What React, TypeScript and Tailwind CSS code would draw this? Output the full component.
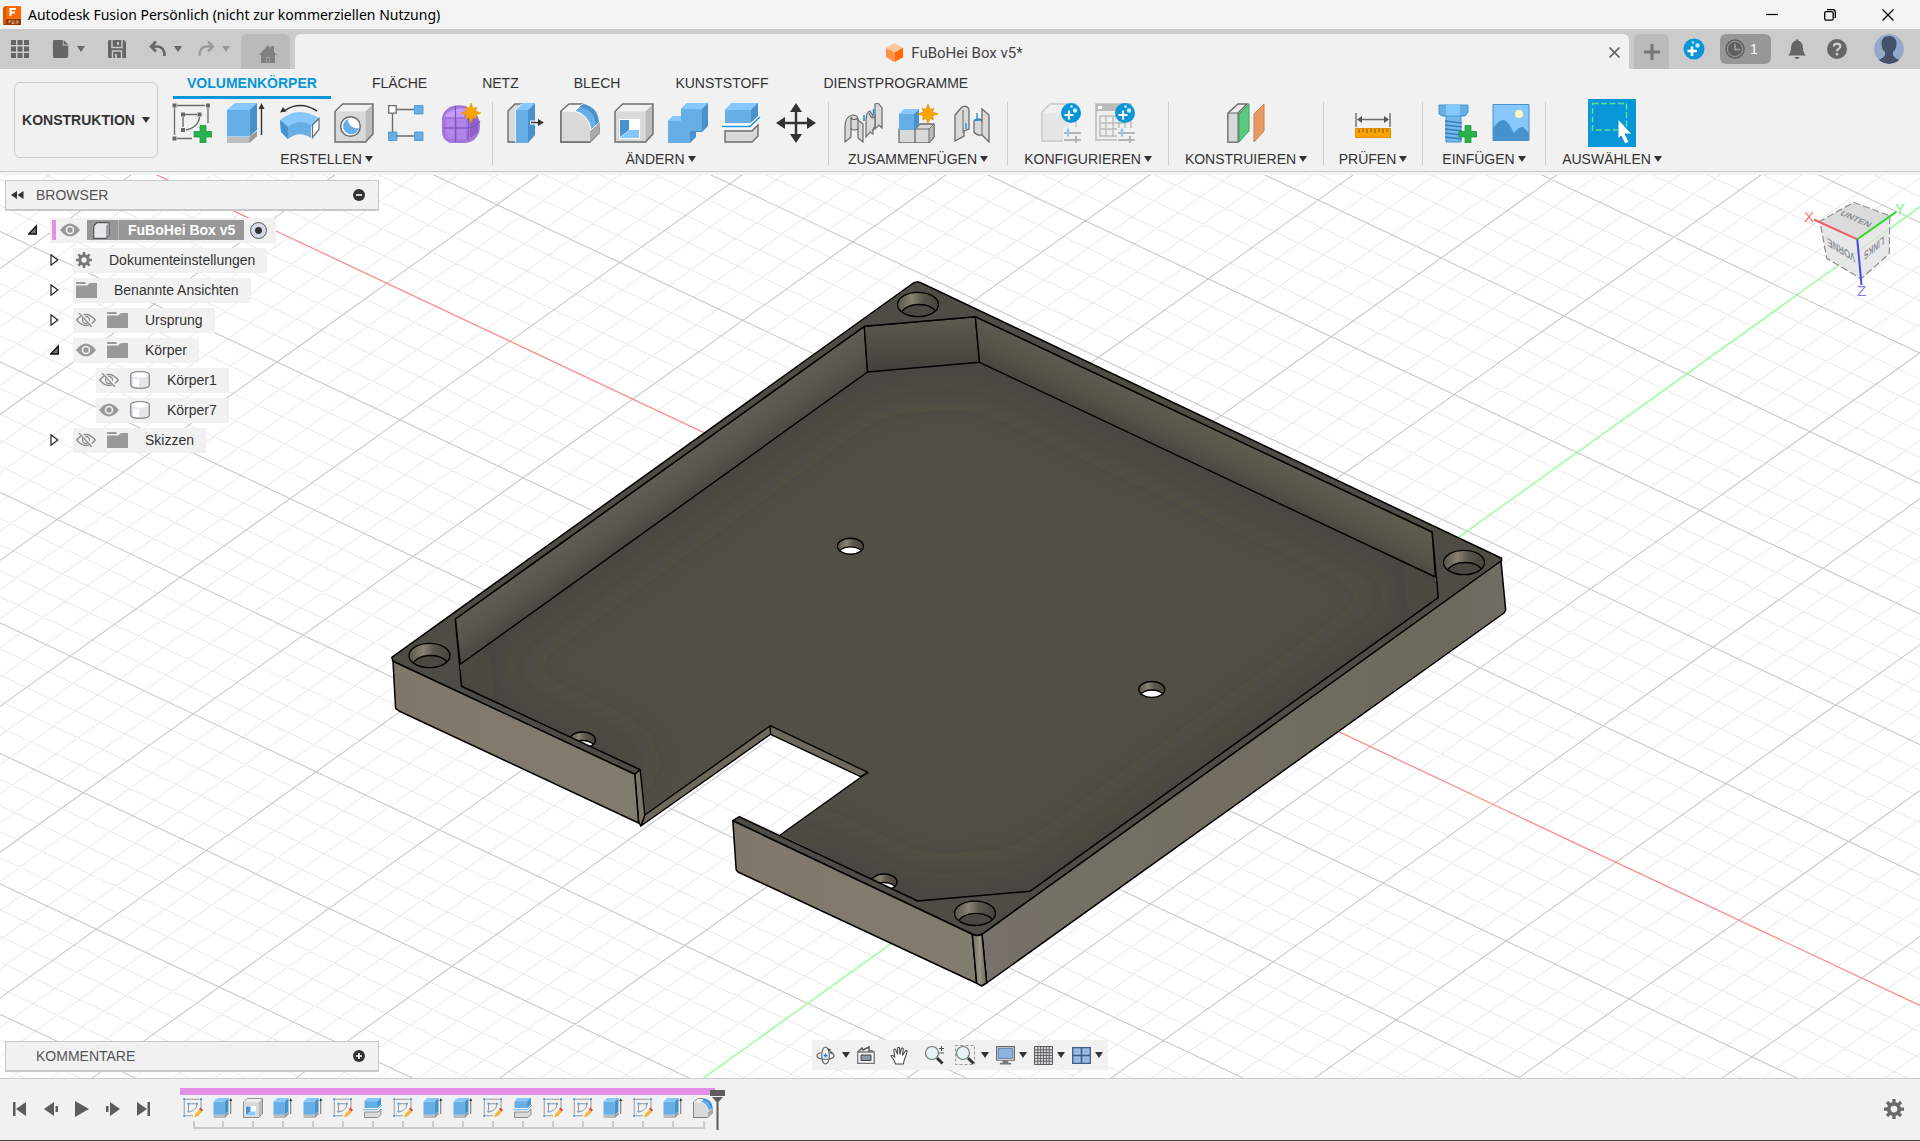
import type { ReactNode } from "react";

const BLUE = "#66aee6";
const BLUE_TOP = "#86c8fd";
const BLUE_SIDE = "#4792cd";
const GREY = "#d9d9d9";
const LINE = "#6b6b6b";

const Svg = ({ size = 40, box = "0 0 40 40", children }: { size?: number; box?: string; children: ReactNode }) => (
  <svg width={size} height={size} viewBox={box} fill="none" className="block shrink-0" aria-hidden="true">
    {children}
  </svg>
);

const Caret = ({ color = "#333" }: { color?: string }) => (
  <svg width="8" height="6" viewBox="0 0 8 6" className="shrink-0" aria-hidden="true">
    <path d="M0 0H8L4 6Z" fill={color} />
  </svg>
);

const Star = ({ x, y, r = 10 }: { x: number; y: number; r?: number }) => {
  const points = Array.from({ length: 16 }, (_, i) => {
    const radius = i % 2 ? r * 0.5 : i % 4 ? r * 0.8 : r;
    const angle = (i * Math.PI) / 8;
    return `${x + radius * Math.sin(angle)},${y - radius * Math.cos(angle)}`;
  }).join(" ");
  return <polygon points={points} fill="#f9a400" stroke="#e38f00" strokeWidth="0.6" />;
};

const GreenPlus = () => <path d="M28 22.5h6v6h6v5.5h-6v6h-6v-6h-6v-5.5h6z" fill="#28b14c" stroke="#14913a" strokeWidth="0.7" />;

const Badge = () => (
  <>
    <path d="M23 30h17M23 37h17M35 33v7" stroke="#b5b5b5" strokeWidth="2.2" />
    <path d="M27 25.5v8" stroke="#8cc6ee" strokeWidth="2.4" />
    <circle cx="30" cy="10" r="10" fill="#0896d9" />
    <path d="M28 7.5v9M23.5 12h9" stroke="#fff" strokeWidth="2.2" />
    <circle cx="34" cy="7.5" r="2.2" fill="#d5f0ff" />
    <circle cx="30.5" cy="3.5" r="1.3" fill="#d5f0ff" />
  </>
);

/* ---------- ribbon icons ---------- */

const SketchIcon = ({ size = 40, pencil = false }: { size?: number; pencil?: boolean }) => (
  <Svg size={size}>
    <path d="M5 2.500H33M2.500 5V32M36 5V20M5 35.500H20" stroke={LINE} strokeWidth="1.3" />
    <path d="M13 11.500H25M11 14V24M27.500 14C27 21 21 26 14 27" stroke={LINE} strokeWidth="1.4" />
    <g fill={pencil ? BLUE_SIDE : "#666"}>
      <path d="M.5.5h4v4h-4zM34 .5h4v4h-4zM.5 33.500h4v4h-4z" />
      <path d="M9 9.500h4v4H9zM25.500 9.500h4v4h-4zM9 25h4v4H9z" />
    </g>
    {pencil ? (
      <>
        <path d="M22 39l3-8 8-8 5 5-8 8z" fill="#f5b740" />
        <path d="M32 22l3-3 5 5-3 3z" fill="#e5383b" />
      </>
    ) : (
      <GreenPlus />
    )}
  </Svg>
);

const ExtrudeIcon = ({ size = 40 }: { size?: number }) => (
  <Svg size={size}>
    <path d="M1 34H23.5L31 28V33L23.5 40H1Z" fill="#bdbdbd" />
    <path d="M23.5 34L31 28V33L23.5 40Z" fill="#999" />
    <path d="M1 7H23.5V33.5H1Z" fill={BLUE} />
    <path d="M1 7L9 0H31L23.5 7Z" fill={BLUE_TOP} />
    <path d="M23.5 7L31 0V27L23.5 33.5Z" fill={BLUE_SIDE} />
    <path d="M35.5 4V32" stroke="#333" strokeWidth="1.4" />
    <path d="M35.5 0L38.5 6H32.5Z" fill="#333" />
  </Svg>
);

const RevolveIcon = () => (
  <Svg>
    <path d="M0 17Q18 2 39 15L32 24Q19 15 8 26Z" fill={BLUE_TOP} />
    <path d="M0 17L8 24Q19 15 31 22V35Q19 27 8 36L1 29Z" fill={BLUE} />
    <path d="M0 17L8 24V36L1 29Z" fill={BLUE_SIDE} />
    <path d="M32.5 22L39 15.5V26.5L32.5 34.5Z" fill="#fff" stroke={LINE} strokeWidth="1.2" />
    <path d="M4 8Q20 -3 37 8" stroke="#333" strokeWidth="1.5" />
    <path d="M0 9.500L3 4L6.5 8.5Z" fill="#333" />
  </Svg>
);

const GreyBlock = () => (
  <>
    <path d="M1 8.5L8.5 1H39V31L31.5 39H1Z" fill="#f0f0f0" />
    <path d="M1 8.5H31.5V39H1Z" fill={GREY} />
    <path d="M31.5 8.5L39 1V31L31.5 39Z" fill="#bcbcbc" />
    <path d="M1 8.5L8.5 1H39V31L31.5 39H1Z" stroke={LINE} strokeWidth="1.4" />
  </>
);

const HoleIcon = () => (
  <Svg>
    <GreyBlock />
    <circle cx="16.5" cy="23.5" r="9.8" fill="#fff" stroke={LINE} strokeWidth="1.5" />
    <path d="M14 16A8 8 0 1 0 25 25A9 9 0 0 1 14 16Z" fill={BLUE} />
  </Svg>
);

const PatternIcon = () => (
  <Svg>
    <path d="M9 6.5H26M4.500 11V29M9 33H26" stroke={LINE} strokeWidth="1.4" />
    <path d="M.7 2.700h7.500v7.500h-7.500z" fill="#fff" stroke={LINE} strokeWidth="1.3" />
    <path d="M26.5 2.5h8.5v8.5h-8.5zM26.5 29h8.5v8.5h-8.5zM.5 29h8.5v8.5H.5z" fill={BLUE} stroke={BLUE_SIDE} strokeWidth="0.8" />
  </Svg>
);

const FormIcon = () => (
  <Svg>
    <path d="M8 4Q14 1 24 3L34 12Q40 18 37 30Q33 39 24 40H8Q-1 37 0 26V15Q1 8 8 4Z" fill="#a477dd" />
    <path d="M3 12Q12 3 25 6L22 14H4Z" fill="#c59bff" />
    <path d="M4 16h9v8H4zM15 16h9v8h-9zM4 26h9v10H7q-3-2-3-6zM15 26h9v10h-9z" fill="#b184ea" />
    <path d="M28 18L36 13V29L28 35Z" fill="#8e5fc8" />
    <path d="M13.5 3V39M1 25H26Q34 24 38 18M26 6Q27 22 26 37" stroke="#7e55b3" strokeWidth="1.2" />
    <Star x={29} y={10} r={10} />
  </Svg>
);

const PressPullIcon = () => (
  <Svg>
    <path d="M2 8L9 1H18V32L10 39H2Z" fill={GREY} stroke={LINE} strokeWidth="1.4" />
    <path d="M9 7L16 0V33L9 40Z" fill="#f1f1f1" />
    <path d="M10 7H22V40H10Z" fill={BLUE} />
    <path d="M10 7L17 0H29L22 7Z" fill={BLUE_TOP} />
    <path d="M22 7L29 0V32L22 40Z" fill={BLUE_SIDE} />
    <path d="M24 19.5H34" stroke="#fff" strokeWidth="4" />
    <path d="M25 19.5H34" stroke="#333" strokeWidth="1.6" />
    <path d="M32 16L38 19.5L32 23Z" fill="#333" />
  </Svg>
);

const FilletIcon = ({ size = 40 }: { size?: number }) => (
  <Svg size={size}>
    <path d="M1 8L9 1H22Q39 6 39 25V30L30 39H1Z" fill="#f2f2f2" stroke={LINE} strokeWidth="1.4" />
    <path d="M1 9H15Q29 12 30 28V39H1Z" fill={GREY} />
    <path d="M30 28L39 20V30L30 39Z" fill="#aaa" />
    <path d="M15 8L22 1Q38 4 39 19L31 27Q29 12 15 8Z" fill={BLUE} stroke="#fff" strokeWidth="1" />
    <path d="M23 1Q38 4 39 19L36 22Q34 6 20 4Z" fill={BLUE_SIDE} />
    <path d="M1 8V39H30" stroke={LINE} strokeWidth="1.4" />
  </Svg>
);

const ShellIcon = ({ size = 40 }: { size?: number }) => (
  <Svg size={size}>
    <GreyBlock />
    <path d="M5 16H26V36H5Z" fill="#fff" />
    <path d="M6 17H15V27L6 34Z" fill={BLUE_SIDE} />
    <path d="M6 35L15 27H25V35Z" fill={BLUE_TOP} />
  </Svg>
);

const CombineIcon = () => (
  <Svg>
    <path d="M0 18L5 13H13V6L19 0H40V23L34 29H28V34L22 40H0Z" fill={BLUE_SIDE} />
    <path d="M0 18L5 13H13V6L19 0H40L34 6H13V18Z" fill={BLUE_TOP} />
    <path d="M0 18H13V6H34V28H22V40H0Z" fill={BLUE} />
  </Svg>
);

const SplitIcon = ({ size = 40 }: { size?: number }) => (
  <Svg size={size}>
    <path d="M3 28H30L36 22V33L30 39H3Z" fill={GREY} stroke={LINE} strokeWidth="1.4" />
    <path d="M3 7L10 0H36V14L29 20H3Z" fill={BLUE} />
    <path d="M3 7L10 0H36L29 7Z" fill={BLUE_TOP} />
    <path d="M29 7L36 0V14L29 20Z" fill={BLUE_SIDE} />
    <path d="M0 23.5H28L38 14" stroke="#fff" strokeWidth="4" />
    <path d="M0 23.5H28L38 14" stroke="#1a94dd" strokeWidth="1.5" />
  </Svg>
);

const MoveIcon = () => (
  <Svg>
    <path d="M20 7V33M7 20H33" stroke="#333" strokeWidth="2.4" />
    <path d="M20 0L26 9H14ZM20 40L26 31H14ZM0 20L9 14V26ZM40 20L31 14V26Z" fill="#333" />
  </Svg>
);

const AssembleIcon = () => (
  <Svg>
    <g fill={GREY} stroke={LINE} strokeWidth="1.2">
      <path d="M31 1L34 0L38 5V25L35 22L31 26Z" />
      <path d="M22 18Q22 9 26 8L29 13V31L26 29L22 34Z" />
      <path d="M25 10Q28 18 31 13V23L28 28" />
      <path d="M1 24Q1 13 9 12Q14 12 14 17L19 21V39L14 35V26Q10 28 7 26V34L1 39Z" />
      <path d="M7 14V26M14 16V26M7 15Q10 18 14 15" />
    </g>
    <path d="M20 12V18M29.500 6V12" stroke="#1a94dd" strokeWidth="1.6" />
  </Svg>
);

const NewComponentIcon = () => (
  <Svg>
    <path d="M1 26H17V40H1ZM17 26L22 21H36V34L31 40H17Z" fill={GREY} stroke={LINE} strokeWidth="1.3" />
    <path d="M31 26L36 21V34L31 40ZM17 26H31" stroke={LINE} fill="#bbb" />
    <path d="M1 11H16V27H1Z" fill={BLUE} />
    <path d="M1 11L6 6H21L16 11Z" fill={BLUE_TOP} />
    <path d="M16 11L21 6V21L16 27Z" fill={BLUE_SIDE} />
    <Star x={30} y={11} r={10} />
  </Svg>
);

const JointIcon = () => (
  <Svg>
    <path d="M3 12L9 5Q14 1 17 6V26L12 28V33L3 38Z" fill={GREY} stroke={LINE} strokeWidth="1.3" />
    <path d="M11 7V30" stroke={LINE} />
    <path d="M22 18Q27 14 30 18V6L37 12V39L30 32Q25 33 22 29Z" fill={GREY} stroke={LINE} strokeWidth="1.3" />
    <path d="M30 18V32" stroke={LINE} />
    <path d="M14 20V26M25 10V18M22 17H28" stroke="#1a94dd" strokeWidth="1.4" />
  </Svg>
);

const ConfigureIcon = () => (
  <Svg>
    <path d="M1 9L9 1H35V31L28 38H1Z" fill="#f0f0f0" stroke="#c6c6c6" strokeWidth="1.5" />
    <path d="M2 10H28V37H2Z" fill="#e6e6e6" />
    <path d="M22 24H40V40H22Z" fill="#f1f1f1" />
    <Badge />
  </Svg>
);

const ConfigTableIcon = () => (
  <Svg>
    <path d="M1 1H36V37H1Z" fill="#eee" stroke="#bbb" strokeWidth="1.5" />
    <path d="M1 1H36V8H1Z" fill="#bababa" />
    <path d="M3 3h4v3H3z" fill="#fff" />
    <path d="M5 13H30V33H5ZM5 20H30M5 26H30M11 13V33M18 13V33M24 13V33" stroke="#bbb" strokeWidth="1.4" />
    <path d="M22 25H40V40H22Z" fill="#f1f1f1" />
    <Badge />
  </Svg>
);

const PlaneIcon = () => (
  <Svg>
    <path d="M2 10L12 1H21L12 10V39H2Z" fill="#eee" stroke={LINE} strokeWidth="1.5" />
    <path d="M2 10H12V39H2Z" fill={GREY} stroke={LINE} />
    <path d="M13 11L23 1V28L13 39Z" fill="#5bc980" stroke="#35a85d" />
    <path d="M28 11L38 1V28L28 39Z" fill="#e79a63" stroke="#d07f44" />
  </Svg>
);

const MeasureIcon = () => (
  <Svg>
    <path d="M3 10V24M37 10V24M6 16.5H34" stroke={LINE} strokeWidth="1.4" />
    <path d="M4 16.5L9 13V20ZM36 16.5L31 13V20Z" fill="#555" />
    <path d="M2.5 25.5H37.5V34.5H2.5Z" fill="#f9a400" stroke="#e08e00" />
    <path d="M6 26v4M10 26v3M14 26v4M18 26v3M22 26v4M26 26v3M30 26v4M34 26v3" stroke="#74500c" />
  </Svg>
);

const BoltIcon = () => (
  <Svg>
    <path d="M9 12H24V39H9Z" fill="#74b7e9" stroke={BLUE_SIDE} />
    <path d="M8 18L25 20M8 22L25 24M8 26L25 28M8 30L25 32M8 34L25 36" stroke="#387fb9" strokeWidth="1.3" />
    <path d="M2 2H31V9L28 13H5L2 11Z" fill={BLUE} stroke={BLUE_SIDE} />
    <path d="M9 1.5H23V12.5H9Z" fill={BLUE_TOP} />
    <GreenPlus />
  </Svg>
);

const PictureIcon = () => (
  <Svg>
    <path d="M2 1.5H38V37.5H2Z" fill={BLUE_TOP} stroke={BLUE_SIDE} />
    <path d="M2 25Q9 16 13 17Q17 18 23 30Q28 23 32 24L38 30V37.5H2Z" fill={BLUE_SIDE} />
    <circle cx="28" cy="11" r="4" fill="#fff6bd" />
  </Svg>
);

const SelectIcon = () => (
  <Svg size={48} box="0 0 48 48">
    <path d="M4.5 4.5H38.5V31H4.5Z" stroke="#65e08c" strokeWidth="1.4" strokeDasharray="6 2.5" />
    <path d="M30 20L44 35H37L41 43L37 45L33 37L30 40Z" fill="#fff" stroke="#0896d9" strokeWidth="1" />
  </Svg>
);

type Group = { label: string; width: string; icons: ReactNode[]; last?: boolean };

const groups: Group[] = [
  {
    label: "ERSTELLEN",
    width: "w-[332px]",
    icons: [<SketchIcon />, <ExtrudeIcon />, <RevolveIcon />, <HoleIcon />, <PatternIcon />, <FormIcon />],
  },
  {
    label: "ÄNDERN",
    width: "w-[336px]",
    icons: [<PressPullIcon />, <FilletIcon />, <ShellIcon />, <CombineIcon />, <SplitIcon />, <MoveIcon />],
  },
  { label: "ZUSAMMENFÜGEN", width: "w-[179px]", icons: [<AssembleIcon />, <NewComponentIcon />, <JointIcon />] },
  { label: "KONFIGURIEREN", width: "w-[161px]", icons: [<ConfigureIcon />, <ConfigTableIcon />] },
  { label: "KONSTRUIEREN", width: "w-[155px]", icons: [<PlaneIcon />] },
  { label: "PRÜFEN", width: "w-[99px]", icons: [<MeasureIcon />] },
  { label: "EINFÜGEN", width: "w-[123px]", icons: [<BoltIcon />, <PictureIcon />] },
  { label: "AUSWÄHLEN", width: "w-[132px]", icons: [<SelectIcon />], last: true },
];

const ribbonTabs = ["VOLUMENKÖRPER", "FLÄCHE", "NETZ", "BLECH", "KUNSTSTOFF", "DIENSTPROGRAMME"];

/* ---------- window chrome ---------- */

const TitleBar = () => (
  <div className="flex h-[29px] shrink-0 items-center bg-[#f3f3f3] pl-[3px]">
    <svg width="18" height="20" viewBox="0 0 18 20" aria-hidden="true">
      <path d="M2 1H18V19H0V3Z" fill="#ff6b00" />
      <path d="M0 14H18V20H0Z" fill="#8f3a05" />
      <path d="M0 3L3 1V19L0 20Z" fill="#d95a00" />
      <path d="M7.5 11V4H13M7.5 7.5H12" stroke="#fff" strokeWidth="2" fill="none" />
      <path d="M6 15.5v3M6 16h2M9 15.5v3h2v-3M12.5 18h2.5v-2h-2" stroke="#f2c7a5" strokeWidth="0.8" fill="none" />
    </svg>
    <span className="ml-[7px] font-['Noto_Sans',sans-serif] text-sm text-black">
      Autodesk Fusion Persönlich (nicht zur kommerziellen Nutzung)
    </span>
    <div className="ml-auto flex h-full items-center text-black">
      <button aria-label="Minimieren" className="flex h-full w-[58px] items-center justify-center">
        <Svg size={12} box="0 0 12 12"><path d="M0 5.5H12" stroke="currentColor" strokeWidth="1.2" /></Svg>
      </button>
      <button aria-label="Verkleinern" className="flex h-full w-[58px] items-center justify-center">
        <Svg size={12} box="0 0 12 12">
          <rect x="0.7" y="2.7" width="8.5" height="8.5" rx="1.5" stroke="currentColor" strokeWidth="1.3" />
          <path d="M3 .7H9Q11.3.7 11.3 3V9" stroke="currentColor" strokeWidth="1.3" />
        </Svg>
      </button>
      <button aria-label="Schließen" className="mr-[3px] flex h-full w-[58px] items-center justify-center">
        <Svg size={12} box="0 0 12 12"><path d="M.5.5L11.5 11.5M11.5.5L.5 11.5" stroke="currentColor" strokeWidth="1.3" /></Svg>
      </button>
    </div>
  </div>
);

const TabBar = () => (
  <div className="flex h-10 shrink-0 items-end bg-[#cbcbcb]">
    <div className="flex h-[35px] w-[241px] items-center pb-1.5 pl-[11px]">
      <button aria-label="Datenbedienfeld">
        <Svg size={18} box="0 0 18 18">
          <path d="M0 0h5v5H0zM6.5 0h5v5h-5zM13 0h5v5h-5zM0 6.5h5v5H0zM6.5 6.5h5v5h-5zM13 6.5h5v5h-5zM0 13h5v5H0zM6.5 13h5v5h-5zM13 13h5v5h-5z" fill="#666" />
        </Svg>
      </button>
      <button aria-label="Datei" className="ml-[23px] flex items-center gap-[7px]">
        <Svg size={18} box="0 0 18 20">
          <path d="M1 0H11V6H17V18Q17 20 15 20H2Q0 20 0 18V2Q0 0 1 0ZM12 0L17 5H12Z" fill="#666" />
        </Svg>
        <Caret color="#666" />
      </button>
      <button aria-label="Speichern" className="ml-[23px]">
        <Svg size={18} box="0 0 18 18">
          <path d="M1 0H16L18 2V18H1L0 17V1Z" fill="#666" />
          <path d="M4 0V7.5H14V0M4.5 18V11H13.5V18" stroke="#cbcbcb" strokeWidth="1.4" />
          <path d="M10 2V5M8 14V18" stroke="#cbcbcb" strokeWidth="1.8" />
        </Svg>
      </button>
      <button aria-label="Rückgängig" className="ml-[23px] flex items-center gap-[7px]">
        <Svg size={18} box="0 0 18 18">
          <path d="M7 1.5L2 6.5L7 11.5M3 6.5H9Q15.5 7 15.5 16" stroke="#666" strokeWidth="2.6" />
        </Svg>
        <Caret color="#666" />
      </button>
      <button aria-label="Wiederherstellen" className="ml-[15px] flex items-center gap-[7px]">
        <Svg size={18} box="0 0 18 18">
          <path d="M11 1.5L16 6.5L11 11.5M15 6.5H9Q2.5 7 2.5 16" stroke="#999" strokeWidth="2.4" />
        </Svg>
        <Caret color="#999" />
      </button>
    </div>
    <button aria-label="Startseite" className="mr-[5px] flex h-[35px] w-[49px] items-center justify-center rounded-t-md bg-[#bababa] pl-1 pt-1">
      <Svg size={18} box="0 0 18 18">
        <path d="M0 10L9 0L12 3.5V1H15V7L18 10H16V18H11V12H7V18H2V10Z" fill="#808080" />
        <path d="M7.5 12.5H10.5V18H7.5Z" fill="#808080" />
      </Svg>
    </button>
    <div className="flex h-[35px] flex-1 items-center rounded-t-md bg-[#f1f1f1] pr-[9px] pt-0.5">
      <div className="flex flex-1 items-center justify-center gap-[7px] pl-1">
        <Svg size={19} box="0 0 19 20">
          <path d="M9.5 0L18.5 5L9.5 10L.5 5Z" fill="#ffc9a0" />
          <path d="M.5 5L9.5 10V20L.5 15Z" fill="#ff9448" />
          <path d="M18.5 5L9.5 10V20L18.5 15Z" fill="#ff6b00" />
        </Svg>
        <span className="font-[Roboto,sans-serif] text-[15px] leading-5 text-[#444]">FuBoHei Box v5*</span>
      </div>
      <button aria-label="Dokument schließen">
        <Svg size={11} box="0 0 11 11"><path d="M.5.5L10.5 10.5M10.5.5L.5 10.5" stroke="#666" strokeWidth="1.7" /></Svg>
      </button>
    </div>
    <button aria-label="Neues Dokument" className="ml-[5px] flex h-[35px] w-[35px] items-center justify-center rounded-t-md bg-[#bababa]">
      <Svg size={16} box="0 0 16 16"><path d="M8 0V16M0 8H16" stroke="#777" strokeWidth="3" /></Svg>
    </button>
    <div className="flex h-[35px] items-start pl-[14px] pr-4">
      <div className="flex h-[30px] items-center">
        <button aria-label="Neuigkeiten">
          <Svg size={22} box="0 0 22 22">
            <circle cx="11" cy="11" r="10.5" fill="#0896d9" />
            <path d="M9 8.5V18M4.5 13H14" stroke="#fff" strokeWidth="2.6" />
            <circle cx="14.5" cy="7.5" r="2.2" fill="#bfe8fb" />
            <circle cx="10" cy="4.5" r="1.3" fill="#bfe8fb" />
          </Svg>
        </button>
        <button className="ml-[15px] flex h-[30px] w-[51px] items-center gap-[5px] rounded-md bg-[#979797] pl-[5px] text-sm text-white">
          <Svg size={20} box="0 0 20 20">
            <circle cx="10" cy="10" r="9" stroke="#606060" strokeWidth="1.5" />
            <circle cx="10" cy="10" r="7" fill="#606060" />
            <path d="M10 5V10.5H15" stroke="#a5a5a5" strokeWidth="1.5" />
          </Svg>
          1
        </button>
        <button aria-label="Benachrichtigungen" className="ml-4">
          <Svg size={20} box="0 0 18 20">
            <path d="M9 0Q10 0 10 1.5Q15 3 15 9Q15 14 18 16.5H0Q3 14 3 9Q3 3 8 1.5Q8 0 9 0ZM6.5 18H11.5Q11 20 9 20Q7 20 6.5 18Z" fill="#666" />
          </Svg>
        </button>
        <button aria-label="Hilfe" className="ml-5">
          <Svg size={20} box="0 0 20 20">
            <circle cx="10" cy="10" r="10" fill="#666" />
            <path d="M6.8 7.5Q7 4.7 10 4.7Q13.3 4.7 13.3 7.3Q13.3 9 11.5 10Q10 10.8 10 12.3" stroke="#cbcbcb" strokeWidth="2.2" />
            <circle cx="10" cy="15.2" r="1.4" fill="#cbcbcb" />
          </Svg>
        </button>
        <button aria-label="Profil" className="ml-[27px] overflow-hidden rounded-full">
          <Svg size={30} box="0 0 30 30">
            <circle cx="15" cy="15" r="15" fill="#93a9ca" />
            <path d="M15 2Q22.5 2 22.5 10Q22 16 19 18V21Q20 24 26 26Q21 30 15 30Q9 30 4 26Q10 24 11 21V18Q8 16 7.5 10Q7.5 2 15 2Z" fill="#44536b" />
          </Svg>
        </button>
      </div>
    </div>
  </div>
);

const Ribbon = () => (
  <div className="flex h-[106px] shrink-0 border-b-[3px] border-[#f4f4f4] bg-[#f1f1f1]">
    <div className="flex flex-1 border-b border-[#c8c8c8]">
      <button className="ml-[14px] mt-[13px] flex h-[76px] w-36 items-center justify-center gap-[7px] rounded-md border border-[#cacaca] text-sm font-bold text-[#333]">
        KONSTRUKTION
        <Caret />
      </button>
      <div className="flex flex-1 flex-col pl-[3px]">
        <div className="flex gap-[27px] pl-3 text-sm text-[#333]">
          {ribbonTabs.map((tab, index) => (
            <button
              key={tab}
              className={
                index === 0
                  ? "h-[30px] border-b-[3px] border-[#0896d9] px-3.5 font-bold text-[#0896d9]"
                  : "h-[30px] border-b-[3px] border-transparent px-3.5"
              }
            >
              {tab}
            </button>
          ))}
        </div>
        <div className="flex pt-[3px]">
          {groups.map((group) => (
            <div
              key={group.label}
              className={`flex h-[63px] flex-col items-center ${group.width} ${group.last ? "" : "border-r border-[#ccc]"}`}
            >
              <div className="flex h-[42px] shrink-0 items-center gap-3.5">
                {group.icons.map((icon, index) => (
                  <button
                    key={index}
                    aria-label={`${group.label} ${index + 1}`}
                    className={group.last ? "bg-[#0896d9]" : ""}
                  >
                    {icon}
                  </button>
                ))}
              </div>
              <button className="mt-[7px] flex items-center gap-[3px] text-sm leading-4 text-[#333]">
                {group.label}
                <Caret />
              </button>
            </div>
          ))}
        </div>
      </div>
    </div>
  </div>
);

/* ---------- canvas ---------- */

// Affine ground grid: origin plus one major step along each axis.
const origin = { x: 1247.3, y: 688.6 };
const stepA = { x: 122.9, y: 57.9 };
const stepB = { x: 109.9, y: -78.7 };

const gridLine = (from: { x: number; y: number }, along: { x: number; y: number }, n: number) => {
  const x = origin.x + from.x * n;
  const y = origin.y + from.y * n;
  return `M${x - along.x * 20} ${y - along.y * 20}L${x + along.x * 20} ${y + along.y * 20}`;
};

const minorGrid: string[] = [];
const majorGrid: string[] = [];
for (let i = -80; i <= 80; i++) {
  if (i === 0) continue;
  const target = i % 5 === 0 ? majorGrid : minorGrid;
  target.push(gridLine(stepB, stepA, i / 5), gridLine(stepA, stepB, i / 5));
}

const floorPath =
  "M867.5 372L979.5 362.3L1435.4 577L1438.2 597.7L1030 891.3L917.7 901L780.2 835L867.8 772.3L770.3 725.7L644.8 815L640 769.7L461.5 686.3L460.3 664.3Z";

const CornerHole = ({ x, y, id }: { x: number; y: number; id: string }) => (
  <>
    <clipPath id={id}><ellipse cx={x} cy={y} rx="20.5" ry="12.2" /></clipPath>
    <ellipse cx={x} cy={y} rx="20.5" ry="12.2" fill="url(#bore)" />
    <g clipPath={`url(#${id})`}>
      <ellipse cx={x + 1} cy={y + 11.5} rx="18.5" ry="11.5" fill="#4b4841" stroke="#000" strokeWidth="1.3" />
    </g>
    <ellipse cx={x} cy={y} rx="20.5" ry="12.2" stroke="#000" strokeWidth="1.3" />
  </>
);

const ScrewHole = ({ x, y, id }: { x: number; y: number; id: string }) => (
  <>
    <clipPath id={id}><ellipse cx={x} cy={y} rx="13" ry="8" /></clipPath>
    <ellipse cx={x} cy={y} rx="13" ry="8" fill="url(#bore)" />
    <g clipPath={`url(#${id})`}>
      <ellipse cx={x} cy={y + 8} rx="12.5" ry="7.5" fill="#fff" stroke="#000" strokeWidth="1.3" />
    </g>
    <ellipse cx={x} cy={y} rx="13" ry="8" stroke="#000" strokeWidth="1.4" />
  </>
);

const Model = () => (
  <g strokeLinejoin="round">
    <defs>
      <linearGradient id="bore"><stop stopColor="#5a564c" /><stop offset="0.35" stopColor="#898172" /><stop offset="0.6" stopColor="#5d584e" /><stop offset="1" stopColor="#454239" /></linearGradient>
      <linearGradient id="wallLeft" gradientUnits="userSpaceOnUse" x1="650" y1="470" x2="682" y2="515">
        <stop stopColor="#645f56" /><stop offset="0.5" stopColor="#59564e" /><stop offset="1" stopColor="#45433d" />
      </linearGradient>
      <linearGradient id="wallBack" x1="0" y1="0" x2="0" y2="1"><stop stopColor="#5e5a50" /><stop offset="1" stopColor="#42403a" /></linearGradient>
      <linearGradient id="wallRight" gradientUnits="userSpaceOnUse" x1="1215" y1="430" x2="1195" y2="471">
        <stop stopColor="#5f5b4f" /><stop offset="0.5" stopColor="#57534a" /><stop offset="1" stopColor="#45433d" />
      </linearGradient>
      <linearGradient id="faceFront"><stop stopColor="#7f776a" /><stop offset="1" stopColor="#827c6f" /></linearGradient>
      <linearGradient id="faceSide"><stop stopColor="#77716a" /><stop offset="0.4" stopColor="#736e61" /><stop offset="0.9" stopColor="#6d695c" /><stop offset="1" stopColor="#716d66" /></linearGradient>
      <linearGradient id="edge"><stop stopColor="#6f6a5e" /><stop offset="0.5" stopColor="#9b9485" /><stop offset="1" stopColor="#6b665b" /></linearGradient>
      <clipPath id="floorClip"><path d={floorPath} /></clipPath>
      <filter id="soft" x="-20%" y="-20%" width="140%" height="140%"><feGaussianBlur stdDeviation="24" /></filter>
    </defs>

    {/* floor with darkened border */}
    <path d={floorPath} fill="#524f47" />
    <g clipPath="url(#floorClip)">
      <path
        d="M640 769.7L461.5 686.3L460.3 664.3L867.5 372L979.5 362.3L1435.4 577L1438.2 597.7L1030 891.3L917.7 901L780.2 835"
        stroke="#34322d"
        strokeOpacity="0.45"
        strokeWidth="36"
        filter="url(#soft)"
      />
    </g>
    <ScrewHole x={850.5} y={546.3} id="screw1" />
    <ScrewHole x={1151.8} y={689.5} id="screw2" />
    <ScrewHole x={582.5} y={740} id="screw3" />
    <ScrewHole x={884} y={882} id="screw4" />

    {/* inner walls */}
    <g stroke="#000" strokeWidth="1.4">
      <path d="M455.3 619L864.3 326.3L867.5 372L460.3 664.3Z" fill="url(#wallLeft)" />
      <path d="M864.3 326.3L975.4 316.7L979.5 362.3L867.5 372Z" fill="url(#wallBack)" />
      <path d="M975.4 316.7L1432.2 532L1435.4 577L979.5 362.3Z" fill="url(#wallRight)" />
    </g>

    {/* rim */}
    <path
      d="M913.4 283Q917 281 920.8 282.7L1501.6 558.3V561L982 934.3Q977 936.5 972.3 934.3L732.8 820.7L739.3 816.7L917.7 901L1030 891.3L1438.2 597.7L1432.2 532L975.4 316.7L864.3 326.3L455.3 619L461.5 686.3L640.2 769.7L634.8 774.3L393 661.3L391.8 657.3Z"
      fill="#4f4c45"
      stroke="#000"
      strokeWidth="1.5"
    />

    {/* cut-out thickness */}
    <g stroke="#000" strokeWidth="1.4" fill="#6f695d">
      <path d="M644.8 815L770.3 725.7L770.6 734.3L640.9 826Z" />
      <path d="M770.3 725.7L867.8 772.3L860.6 776.7L770.6 734.3Z" />
      <path d="M780.2 835L867.8 772.3" />
      <path d="M634.8 774.3L640.2 769.7L644.8 815L640.9 826L638.6 822.3Z" fill="#7b7568" />
    </g>

    {/* outer faces */}
    <g stroke="#000" strokeWidth="1.5">
      <path d="M393 661.3L634.8 774.3L638.6 823L399 711L395.6 708.3Z" fill="url(#faceFront)" />
      <path d="M732.8 820.7L972.3 934.3L976.7 983.3L738 872L736.2 870Z" fill="url(#faceFront)" />
      <path d="M982 934.3L1501 561L1505.7 610L1504 613L986.7 983Z" fill="url(#faceSide)" />
      <path d="M972.3 934.3Q977 936.5 982 934.3L986.7 983L981.7 986L976.7 983.3Z" fill="url(#edge)" />
    </g>
    <CornerHole x={918} y={304.5} id="corner1" />
    <CornerHole x={1464} y={562.5} id="corner2" />
    <CornerHole x={429.5} y={655.5} id="corner3" />
    <CornerHole x={975} y={913.3} id="corner4" />
  </g>
);

const ViewCube = () => (
  <g fontFamily="Liberation Sans, sans-serif">
    <path d="M1853.7 202.3L1889.7 215.7L1857.3 239.3L1820 221.3Z" fill="#d5d5d5" fillOpacity="0.85" />
    <path d="M1820 221.3L1857.3 239.3L1861 278.7L1826.7 258.3Z" fill="#e3e3e3" fillOpacity="0.85" />
    <path d="M1857.3 239.3L1889.7 215.7L1889.3 253.7L1861 278.7Z" fill="#e0e0e0" fillOpacity="0.75" />
    <path d="M1853.7 202.3L1889.7 215.7L1889.3 253.7L1861 278.7L1826.7 258.3L1820 221.3Z" stroke="#8e8e8e" strokeWidth="1.2" strokeDasharray="7 3" />
    <g fill="#8b9095" fontSize="10" fontWeight="bold" textAnchor="middle">
      <text transform="matrix(.86 .37 -.6 .6 1854 221)">UNTEN</text>
      <text transform="matrix(-.78 -.48 -.1 -1.2 1841 246)">VORNE</text>
      <text transform="matrix(-.66 .55 0 -1.2 1874 244)">LINKS</text>
    </g>
    <path d="M1857.3 239.3L1814 219.5" stroke="#ec5f5f" strokeWidth="2" />
    <path d="M1857.3 239.3L1896 212" stroke="#1ee01e" strokeWidth="2" />
    <path d="M1857.3 239.3L1861.5 285" stroke="#4848e6" strokeWidth="2" />
    <g fontSize="15">
      <text x="1804" y="222" fill="#ff7373">X</text>
      <text x="1895" y="214" fill="#7df57d">Y</text>
      <text x="1857" y="296" fill="#7c7cf5">Z</text>
    </g>
  </g>
);

const Scene = () => (
  <svg viewBox="0 175 1920 903" preserveAspectRatio="xMidYMid slice" className="absolute inset-0 h-full w-full" fill="none" aria-label="FuBoHei Box v5">
    <path d={minorGrid.join("")} stroke="#ececec" strokeWidth="1.1" />
    <path d={majorGrid.join("")} stroke="#c9c9c9" strokeWidth="1.1" />
    <path d={gridLine(stepB, stepA, 0)} stroke="#ff8c8c" strokeWidth="1.3" />
    <path d={gridLine(stepA, stepB, 0)} stroke="#8cff8c" strokeWidth="1.3" />
    <Model />
    <ViewCube />
  </svg>
);

/* ---------- browser tree ---------- */

const Eye = ({ hidden = false }: { hidden?: boolean }) => (
  <svg width="20" height="14" viewBox="0 0 20 14" fill="none" className="shrink-0" aria-hidden="true">
    {hidden ? (
      <>
        <path d="M.7 7Q10 -4 19.3 7Q10 18 .7 7Z" stroke="#8c8c8c" strokeWidth="1.3" />
        <circle cx="10" cy="7" r="3.5" stroke="#8c8c8c" strokeWidth="1.3" />
        <path d="M4 0L17 14" stroke="#f1f1f1" strokeWidth="3" />
        <path d="M3 0L16 14" stroke="#8c8c8c" strokeWidth="1.3" />
      </>
    ) : (
      <>
        <path d="M0 7Q10 -6 20 7Q10 20 0 7Z" fill="#999" />
        <circle cx="10" cy="7" r="3.5" stroke="#f1f1f1" strokeWidth="1.6" />
      </>
    )}
  </svg>
);

const Folder = () => (
  <svg width="21" height="16" viewBox="0 0 21 16" className="shrink-0" aria-hidden="true">
    <path d="M0 0H9L10 2H0ZM0 3.5H11L14 1H21V16H0Z" fill="#999" />
  </svg>
);

const Body = () => (
  <svg width="20" height="18" viewBox="0 0 20 18" className="shrink-0" aria-hidden="true">
    <path d="M.7 4Q1 .7 10 .7Q19 .7 19.3 4V14Q19 17.3 10 17.3Q1 17.3 .7 14Z" fill="#e6e6ea" stroke="#888" strokeWidth="1.3" />
    <ellipse cx="10" cy="4" rx="8.5" ry="2.8" fill="#fff" />
    <path d="M3 7.500Q6 8.500 9 8.500V16Q5 16 3 15Z" fill="#fff" />
  </svg>
);

const Gear = ({ size = 16, color = "#777" }: { size?: number; color?: string }) => (
  <Svg size={size} box="0 0 16 16">
    <circle cx="8" cy="8" r="4.2" stroke={color} strokeWidth="3" />
    <path d="M8 0V3M8 13V16M0 8H3M13 8H16M2.4 2.4L4.5 4.5M11.5 11.5L13.6 13.6M13.6 2.4L11.5 4.5M4.5 11.5L2.4 13.6" stroke={color} strokeWidth="2.6" />
  </Svg>
);

const Twisty = ({ open = false }: { open?: boolean }) => (
  <svg width="9" height="12" viewBox="0 0 9 12" className="shrink-0" aria-hidden="true">
    {open ? (
      <path d="M.7 10H8.3V2Z" fill="#777" stroke="#111" strokeWidth="1.3" />
    ) : (
      <path d="M1 .8L7.8 6L1 11.2Z" fill="#fff" stroke="#222" strokeWidth="1.2" />
    )}
  </svg>
);

type TreeItem = {
  name: string;
  twisty?: "open" | "closed";
  eye?: "on" | "off";
  icon: ReactNode;
};

const tree: TreeItem[] = [
  { name: "Dokumenteinstellungen", twisty: "closed", icon: <Gear /> },
  { name: "Benannte Ansichten", twisty: "closed", icon: <Folder /> },
  { name: "Ursprung", twisty: "closed", eye: "off", icon: <Folder /> },
  { name: "Körper", twisty: "open", eye: "on", icon: <Folder /> },
  { name: "Körper1", eye: "off", icon: <Body /> },
  { name: "Körper7", eye: "on", icon: <Body /> },
  { name: "Skizzen", twisty: "closed", eye: "off", icon: <Folder /> },
];

const TreeRow = ({ item }: { item: TreeItem }) => (
  <li className={`flex h-[30px] items-center ${item.twisty ? "pl-[50px]" : "pl-24"}`}>
    {item.twisty && (
      <button aria-label={`${item.name} aufklappen`} className="mr-3.5">
        <Twisty open={item.twisty === "open"} />
      </button>
    )}
    <div className="flex h-[25px] items-center bg-[#f1f1f1] pl-[3px] pr-3">
      {item.eye && (
        <button aria-label={`${item.name} Sichtbarkeit`} className="mr-[11px]">
          <Eye hidden={item.eye === "off"} />
        </button>
      )}
      {item.icon}
      <span className="ml-[17px]">{item.name}</span>
    </div>
  </li>
);

const PanelHeader = ({ title, collapsed = false }: { title: string; collapsed?: boolean }) => (
  <div className="flex h-[31px] w-[374px] items-center border border-b-2 border-[#c8c8c8] bg-[#f1f1f1] pl-[5px] pr-[13px] text-sm text-[#555]">
    <div className="w-[25px]">
      {!collapsed && (
        <svg width="13" height="8" viewBox="0 0 13 8" aria-hidden="true"><path d="M6 0V8L0 4ZM12.5 0V8L6.5 4Z" fill="#333" /></svg>
      )}
    </div>
    {title}
    <button aria-label={`${title} umschalten`} className="ml-auto">
      <Svg size={12} box="0 0 12 12">
        <circle cx="6" cy="6" r="6" fill="#333" />
        <path d={collapsed ? "M3 6H9M6 3V9" : "M3 6H9"} stroke="#fff" strokeWidth="1.6" />
      </Svg>
    </button>
  </div>
);

const Browser = () => (
  <div className="relative ml-[5px] mt-[5px] w-[374px]">
    <PanelHeader title="BROWSER" />
    <ul className="-ml-[5px] mt-1 text-sm text-[#333]">
      <li className="flex h-[30px] items-center pl-7">
        <button aria-label="Box aufklappen" className="mr-[13px]"><Twisty open /></button>
        <div className="flex h-[25px] items-center bg-[#f1f1f1] pl-0.5 pr-[9px]">
          <div className="mr-1 h-5 w-1 bg-[#e290e6]" />
          <Eye />
          <div className="ml-[7px] flex h-5 items-center bg-[#979797] font-bold text-white">
            <span className="flex h-5 w-8 items-center border-r border-[#b5b5b5] pl-1.5">
              <Svg size={17} box="0 0 17 17">
                <path d="M.7 4L4 .7H16V13L13 16.3H.7Z" fill="#e6e9ec" stroke="#555" strokeWidth="1.2" />
                <path d="M13 4L16 .7V13L13 16.3Z" fill="#9a9ea3" />
              </Svg>
            </span>
            <span className="px-[9px]">FuBoHei Box v5</span>
          </div>
          <input
            type="radio"
            defaultChecked
            aria-label="Komponente aktivieren"
            className="ml-1.5 size-[17px] appearance-none rounded-full border border-[#555] bg-[radial-gradient(circle,#333_0_3px,#d5dbe6_4px)]"
          />
        </div>
      </li>
      {tree.map((item) => (
        <TreeRow key={item.name} item={item} />
      ))}
    </ul>
  </div>
);

const Lens = () => (
  <>
    <path d="M13 13L18.5 18.5" stroke="#333" strokeWidth="3" />
    <circle cx="8" cy="8" r="6.5" fill="#e6f3f3" stroke="#777" strokeWidth="1.2" />
  </>
);

const NavBar = () => (
  <div className="absolute bottom-2 left-1/2 flex h-[30px] w-[296px] -translate-x-1/2 items-center gap-[7px] bg-[#f1f1f1] pl-1">
    <button aria-label="Orbit" className="flex items-center gap-[7px]">
      <Svg size={19} box="0 0 20 20">
        <path d="M10 1Q14 2 14 10Q14 18 10 19Q6 18 6 10Q6 2 10 1ZM5 7Q1 8 1 10.5Q2 14 10 14Q18 14 19 10.5Q19 8 15 7" stroke="#666" strokeWidth="1.2" />
        <path d="M10 8v4M8 10h4" stroke="#1680e0" strokeWidth="1.4" />
        <path d="M12 2l4 2-3 2zM15 5l3 2-3 1z" fill="#444" />
      </Svg>
      <Caret />
    </button>
    <button aria-label="Ansehen">
      <Svg size={18} box="0 0 18 18">
        <path d="M1 6L5 2L6 4L12 1V5H16" stroke="#555" strokeWidth="1.5" />
        <path d="M.7 6H17.3V17.3H.7Z" fill="#f5f5f5" stroke="#777" strokeWidth="1.3" />
        <path d="M4 9H14V14.5H4Z" fill="#8d99a8" stroke="#444" />
      </Svg>
    </button>
    <button aria-label="Pan" className="px-2">
      <Svg size={19} box="0 0 20 20">
        <path d="M6 19Q5 15 1 10.5Q2 9 5 11.5L4 4Q5 2.5 6 4L8 9V2Q9 .5 10 2L10.5 9L12 2.5Q13.5 1.5 14 3L13 10L16.5 5Q18 4.5 18 6L15 15L14 19Z" fill="#fff" stroke="#444" strokeWidth="1.1" />
      </Svg>
    </button>
    <button aria-label="Zoom" className="pr-1">
      <Svg size={20} box="0 0 20 20">
        <Lens />
        <path d="M17.5 1V6M15 3.5H20M15 8H20" stroke="#555" strokeWidth="1.1" />
      </Svg>
    </button>
    <button aria-label="Einpassen" className="flex items-center gap-1.5">
      <Svg size={20} box="0 0 20 20">
        <path d="M.5.5H19.5V19.5H.5Z" stroke="#999" strokeDasharray="3 2" />
        <Lens />
      </Svg>
      <Caret />
    </button>
    <button aria-label="Anzeigeeinstellungen" className="flex items-center gap-1">
      <Svg size={19} box="0 0 20 20">
        <path d="M.7.7H19.3V15H.7Z" fill="#eee" stroke="#666" strokeWidth="1.3" />
        <path d="M2.5 2.5H17.5V13H2.5Z" fill="#8fb4df" stroke="#5c7fa8" />
        <path d="M7 15H13V17.5H16V19.5H4V17.5H7Z" fill="#777" />
      </Svg>
      <Caret />
    </button>
    <button aria-label="Raster" className="flex items-center gap-1">
      <Svg size={19} box="0 0 20 20">
        <path d="M.5.5H19.5V19.5H.5Z" fill="#d5d5dc" stroke="#555" />
        <path d="M4 0V20M7 0V20M10 0V20M13 0V20M16 0V20M0 4H20M0 7H20M0 10H20M0 13H20M0 16H20" stroke="#555" strokeWidth="0.9" />
      </Svg>
      <Caret />
    </button>
    <button aria-label="Ansichtsfenster" className="flex items-center gap-1">
      <Svg size={19} box="0 0 20 20">
        <path d="M.7 1.7H19.3V18.3H.7Z" fill="#8fb0dc" stroke="#3f5f8c" strokeWidth="1.3" />
        <path d="M10 2V18M1 10H19" stroke="#3f5f8c" strokeWidth="1.6" />
        <path d="M3 4H8V8H3ZM12 4H17V8H12ZM3 12H8V16H3ZM12 12H17V16H12Z" stroke="#a9c4e8" />
      </Svg>
      <Caret />
    </button>
  </div>
);

/* ---------- timeline ---------- */

const timeline = [
  "sketch", "extrude", "shell", "extrude", "extrude", "sketch", "split", "sketch", "extrude",
  "extrude", "sketch", "split", "sketch", "sketch", "extrude", "sketch", "extrude", "fillet",
];

const featureIcon = (kind: string) => {
  if (kind === "sketch") return <SketchIcon size={20} pencil />;
  if (kind === "extrude") return <ExtrudeIcon size={20} />;
  if (kind === "shell") return <ShellIcon size={20} />;
  if (kind === "split") return <SplitIcon size={20} />;
  return <FilletIcon size={20} />;
};

const Connector = ({ index }: { index: number }) => {
  if (index === 0) return <div className="ml-[13px] mt-[3px] h-2 border-b-2 border-l-2 border-[#ccc]" />;
  if (index === timeline.length - 1) return <div className="mt-[3px] h-2 w-[15px] border-b-2 border-r-2 border-[#ccc]" />;
  return (
    <div className="mt-[3px] flex h-2 border-b-2 border-[#ccc] pl-3">
      <div className="w-0.5 bg-[#ccc]" />
    </div>
  );
};

const transport = [
  { name: "Anfang", path: "M1 1H3.5V15H1ZM14 1V15L4 8Z" },
  { name: "Zurück", path: "M11 1V15L1 8ZM12.5 5H15V11H12.5Z" },
  { name: "Abspielen", path: "M1 0L15 8L1 16Z" },
  { name: "Vor", path: "M5 1V15L15 8ZM1 5H3.5V11H1Z" },
  { name: "Ende", path: "M1 1V15L11 8ZM11.5 1H14V15H11.5Z" },
];

const Timeline = () => (
  <footer className="flex h-[63px] shrink-0 border-b border-t border-b-[#444] border-t-[#ccc] bg-[#f1f1f1]">
    <div className="flex h-[59px] w-[180px] items-center gap-[15px] pl-3">
      {transport.map((button) => (
        <button key={button.name} aria-label={button.name}>
          <Svg size={16} box="0 0 16 16"><path d={button.path} fill="#5c5c5c" /></Svg>
        </button>
      ))}
    </div>
    <div className="flex pt-[9px]">
      <div>
        <div className="h-[7px] bg-[#e290e6]" />
        <div className="flex">
          {timeline.map((kind, index) => (
            <div key={index} className={index === timeline.length - 1 ? "w-[25px]" : "w-[30px]"}>
              <button aria-label={`Schritt ${index + 1}`} className="ml-[3px] mt-[3px] block">
                {featureIcon(kind)}
              </button>
              <Connector index={index} />
            </div>
          ))}
        </div>
      </div>
      <svg width="15" height="42" viewBox="0 0 15 42" className="-ml-[5px] mt-0.5" aria-hidden="true">
        <path d="M0 0H15V6H0ZM2 7H13L8.500 12V40H6.500V12Z" fill="#5c5c5c" />
      </svg>
    </div>
    <button aria-label="Einstellungen" className="ml-auto mr-4 h-[59px]"><Gear size={20} color="#6a6a6a" /></button>
  </footer>
);

const App = () => {
  return (
    <div className="flex h-screen flex-col overflow-hidden bg-[#f1f1f1] font-['Liberation_Sans',Arial,sans-serif]">
      <TitleBar />
      <TabBar />
      <Ribbon />
      <main className="relative min-h-0 flex-1 overflow-hidden bg-white">
        <Scene />
        <Browser />
        <div className="absolute bottom-1.5 left-[5px]">
          <PanelHeader title="KOMMENTARE" collapsed />
        </div>
        <NavBar />
      </main>
      <Timeline />
    </div>
  );
};

export default App;
